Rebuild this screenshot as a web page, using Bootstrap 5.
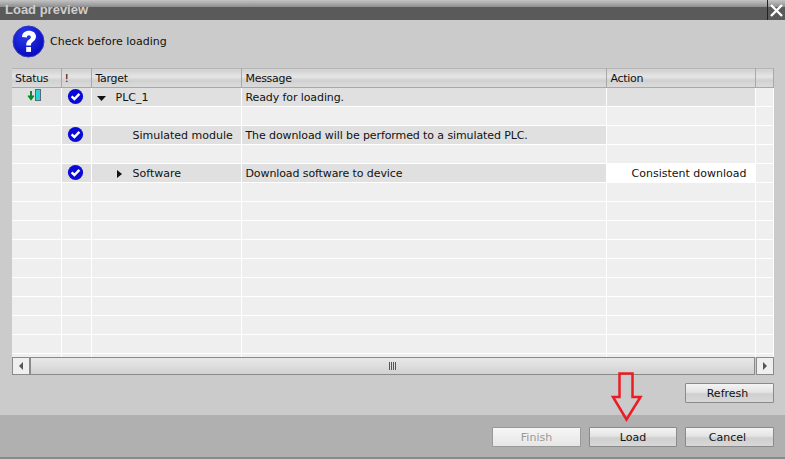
<!DOCTYPE html>
<html lang="en">
<head>
    <meta charset="UTF-8">
    <meta name="viewport" content="width=device-width, initial-scale=1.0">
    <title>Load preview</title>
    <link href="https://cdn.jsdelivr.net/npm/bootstrap@5.3.2/dist/css/bootstrap.min.css" rel="stylesheet"/>
    <style>
        html, body { height: 459px; overflow: hidden; }
        body { background: #cbcbcb; font-family: "DejaVu Sans", sans-serif; font-size: 11px; color: #111; position: relative; }
        .title-bar { height: 20px; background: linear-gradient(#c4c4c4 0, #8e8e8e 7px, #5a5a5a 7px, #5a5a5a 100%); color: #cfcfcf; font-family: "Liberation Sans", sans-serif; font-weight: 700; font-size: 13px; line-height: 19px; padding-left: 5px; }
        .close-x { width: 18px; height: 20px; border-left: 1px solid #222; }
        .check-row { height: 48px; padding: 0 0 5px 12px; gap: 5px; }
        .check-label { padding-top: 2px; }
        .grid-wrap { margin: 0 11px 0 12px; height: 289px; background: #efefef; overflow: hidden; }
        .grid-wrap .table { table-layout: fixed; width: 762px; margin: 0; font-size: 11px; --bs-table-bg: transparent; }
        .grid-wrap .table > :not(caption) > * > * { padding: 2px 0 0 4px; height: 19px; line-height: 16px; border: 0; border-right: 1px solid #fff; border-bottom: 1px solid #fff; box-shadow: none; color: #111; white-space: nowrap; overflow: hidden; }
        .grid-wrap .table > thead > tr > th { height: 19px; font-weight: 400; letter-spacing: -.3px; --bs-table-bg: transparent; background: linear-gradient(#cfcfcf, #e6e6e6 40%, #d0d0d0 60%, #dcdcdc); border-top: 1px solid #b4b4b4; border-right: 1px solid #a8a8a8; border-bottom: 1px solid #a8a8a8; }
        .grid-wrap .table > thead > tr > th.tight { padding-left: 3px; }
        .grid-wrap .table > tbody > tr > td { --bs-table-bg: #efefef; }
        .grid-wrap .table > tbody > tr > td.dk { --bs-table-bg: #e0e0e0; }
        .grid-wrap .table > tbody > tr > td.wh { --bs-table-bg: #fff; text-align: right; padding-right: 8px; }
        .grid-wrap .table > tbody > tr > td.msg { letter-spacing: -.1px; }
        .grid-wrap .table > tbody > tr > td.ic-status { padding: 1px 0 0 15px; }
        .grid-wrap .table > tbody > tr > td.ic-check { padding: 0 0 0 5px; }
        .ic-status svg, .ic-check svg { display: block; }
        .tree-a { display: inline-block; width: 19px; margin-left: 1px; }
        .tree-b { display: inline-block; width: 16px; margin-left: 21px; }
        .tree-none { display: inline-block; margin-left: 37px; }
        .h-scroll { margin: 0 11px 0 12px; height: 19px; }
        .sb-btn { width: 18px; height: 18px; background: #efefef; border: 1px solid #8a8a8a; }
        .sb-track { background: linear-gradient(#e8e8e8, #d2d2d2); border: 1px solid #8a8a8a; height: 18px; margin-right: 1px; }
        .grips { width: 8px; height: 8px; background: repeating-linear-gradient(90deg, #555 0 1px, transparent 1px 2px); }
        .refresh-row { height: 39px; padding: 7px 11px 0 0; }
        .foot-bar { height: 42px; background: #b0b0b0; padding: 12px 11px 0 0; gap: 8px; }
        .bottom-line { height: 2px; background: #8a8a8a; }
        .sim-btn { width: 89px; height: 20px; padding: 0; font-size: 11px; line-height: 20px; color: #111; border: 1px solid #8a8a8a; border-radius: 1px; background: linear-gradient(#f4f4f4, #e4e4e4 45%, #cfcfcf 55%, #d8d8d8); }
        .sim-btn:disabled { color: #999; border-color: #999; opacity: 1; background: linear-gradient(#f6f6f6, #e6e6e6); }
        .sim-btn.btn-load { width: 88px; }
        .sim-btn.btn-nudge { padding-right: 4px; }
        .red-arrow { position: absolute; left: 610px; top: 370px; }
    </style>
</head>
<body>
    <!-- Dialog title -->
    <div class="title-bar d-flex justify-content-between">
        <span>Load preview</span>
        <div class="close-x">
            <svg width="17" height="20" viewBox="0 0 17 20"><path d="M3 4 L14 15 M14 4 L3 15" stroke="#fff" stroke-width="2.4" fill="none"/></svg>
        </div>
    </div>

    <div class="check-row d-flex align-items-center">
        <svg width="33" height="33" viewBox="0 0 33 33">
            <defs><radialGradient id="qb" cx="40%" cy="30%" r="75%"><stop offset="0" stop-color="#2a3cf0"/><stop offset="1" stop-color="#0505b8"/></radialGradient></defs>
            <circle cx="16.5" cy="16.5" r="15.5" fill="url(#qb)" stroke="#3a3ac0"/>
            <path d="M10 12 C10 8 13 5.7 17 5.7 C21.2 5.7 24 8 24 11.6 C24 14.4 22.3 15.8 20.6 17 C19.4 17.9 19 18.6 19 20.5 L14.2 20.5 C14.2 17.6 15 16.2 16.8 14.8 C18 13.9 18.8 13.2 18.8 12.2 C18.8 11 18 10.2 16.9 10.2 C15.6 10.2 15 11.1 14.9 12.5 Z" fill="#fff"/>
            <rect x="14.2" y="22" width="4.8" height="4.9" fill="#fff"/>
        </svg>
        <span class="check-label">Check before loading</span>
    </div>

    <!-- Compare list -->
    <div class="grid-wrap" id="grid"></div>

    <div class="h-scroll d-flex">
        <div class="sb-btn d-flex align-items-center justify-content-center">
            <svg width="6" height="8" viewBox="0 0 6 8"><path d="M5 0 L1 4 L5 8 Z" fill="#555"/></svg>
        </div>
        <div class="sb-track flex-grow-1 d-flex align-items-center justify-content-center"><div class="grips"></div></div>
        <div class="sb-btn d-flex align-items-center justify-content-center">
            <svg width="6" height="8" viewBox="0 0 6 8"><path d="M1 0 L5 4 L1 8 Z" fill="#555"/></svg>
        </div>
    </div>

    <div class="refresh-row d-flex justify-content-end">
        <button type="button" class="btn sim-btn btn-nudge">Refresh</button>
    </div>

    <div class="foot-bar d-flex justify-content-end">
        <button type="button" class="btn sim-btn" disabled>Finish</button>
        <button type="button" class="btn sim-btn btn-load">Load</button>
        <button type="button" class="btn sim-btn btn-nudge">Cancel</button>
    </div>
    <div class="bottom-line"></div>

    <!-- Annotation -->
    <svg class="red-arrow" width="34" height="52" viewBox="0 0 34 52">
        <path d="M9.5 3.5 H22.5 V27 H30.5 L16.5 49.5 L3 27 H9.5 Z" fill="none" stroke="#ed1c24" stroke-width="2.5"/>
    </svg>

    <script>
        var check = '<svg width="17" height="17" viewBox="0 0 17 17"><circle cx="8.5" cy="8.5" r="7.6" fill="#0a0ad8"/><path d="M4.6 8.4 L7.4 11 L12.4 5.8" stroke="#fff" stroke-width="2.4" fill="none"/></svg>';
        var status = '<svg width="16" height="13" viewBox="0 0 16 13"><path d="M4 2 V9 M1.3 6.5 L4 10 L6.7 6.5" stroke="#0a8a2a" stroke-width="2" fill="none"/><rect x="8.5" y="0.5" width="5" height="11" fill="#28d4d8" stroke="#5a6a70"/></svg>';
        var rows = [
            { status: status, check: true, target: '<span class="tree-a"><svg width="9" height="5" viewBox="0 0 9 5"><path d="M0 0 H9 L4.5 5 Z" fill="#111"/></svg></span>PLC_1', msg: 'Ready for loading.', dark: true, act: 'dk' },
            {},
            { check: true, target: '<span class="tree-none">Simulated module</span>', msg: 'The download will be performed to a simulated PLC.', dark: true },
            {},
            { check: true, target: '<span class="tree-b"><svg width="5" height="8" viewBox="0 0 5 8"><path d="M0 0 V8 L5 4 Z" fill="#111"/></svg></span>Software', msg: 'Download software to device', dark: true, act: 'wh', action: 'Consistent download' }
        ];
        for (var i = rows.length; i < 15; i++) rows.push({});

        var html = '<table class="table"><colgroup><col style="width:49px"><col style="width:30px"><col style="width:150px"><col style="width:365px"><col style="width:149px"><col></colgroup>';
        html += '<thead><tr><th class="tight">Status</th><th class="tight">!</th><th>Target</th><th>Message</th><th>Action</th><th></th></tr></thead><tbody>';
        rows.forEach(function(r) {
            var d = r.dark ? 'dk' : '';
            html += '<tr><td class="ic-status' + (r.status ? ' dk' : '') + '">' + (r.status || '') + '</td>';
            html += '<td class="ic-check' + (r.check ? ' dk' : '') + '">' + (r.check ? check : '') + '</td>';
            html += '<td class="' + d + '">' + (r.target || '') + '</td>';
            html += '<td class="msg ' + d + '">' + (r.msg || '') + '</td>';
            html += '<td class="' + (r.act || '') + '">' + (r.action || '') + '</td><td></td></tr>';
        });
        html += '</tbody></table>';
        document.getElementById('grid').innerHTML = html;
    </script>
</body>
</html>
